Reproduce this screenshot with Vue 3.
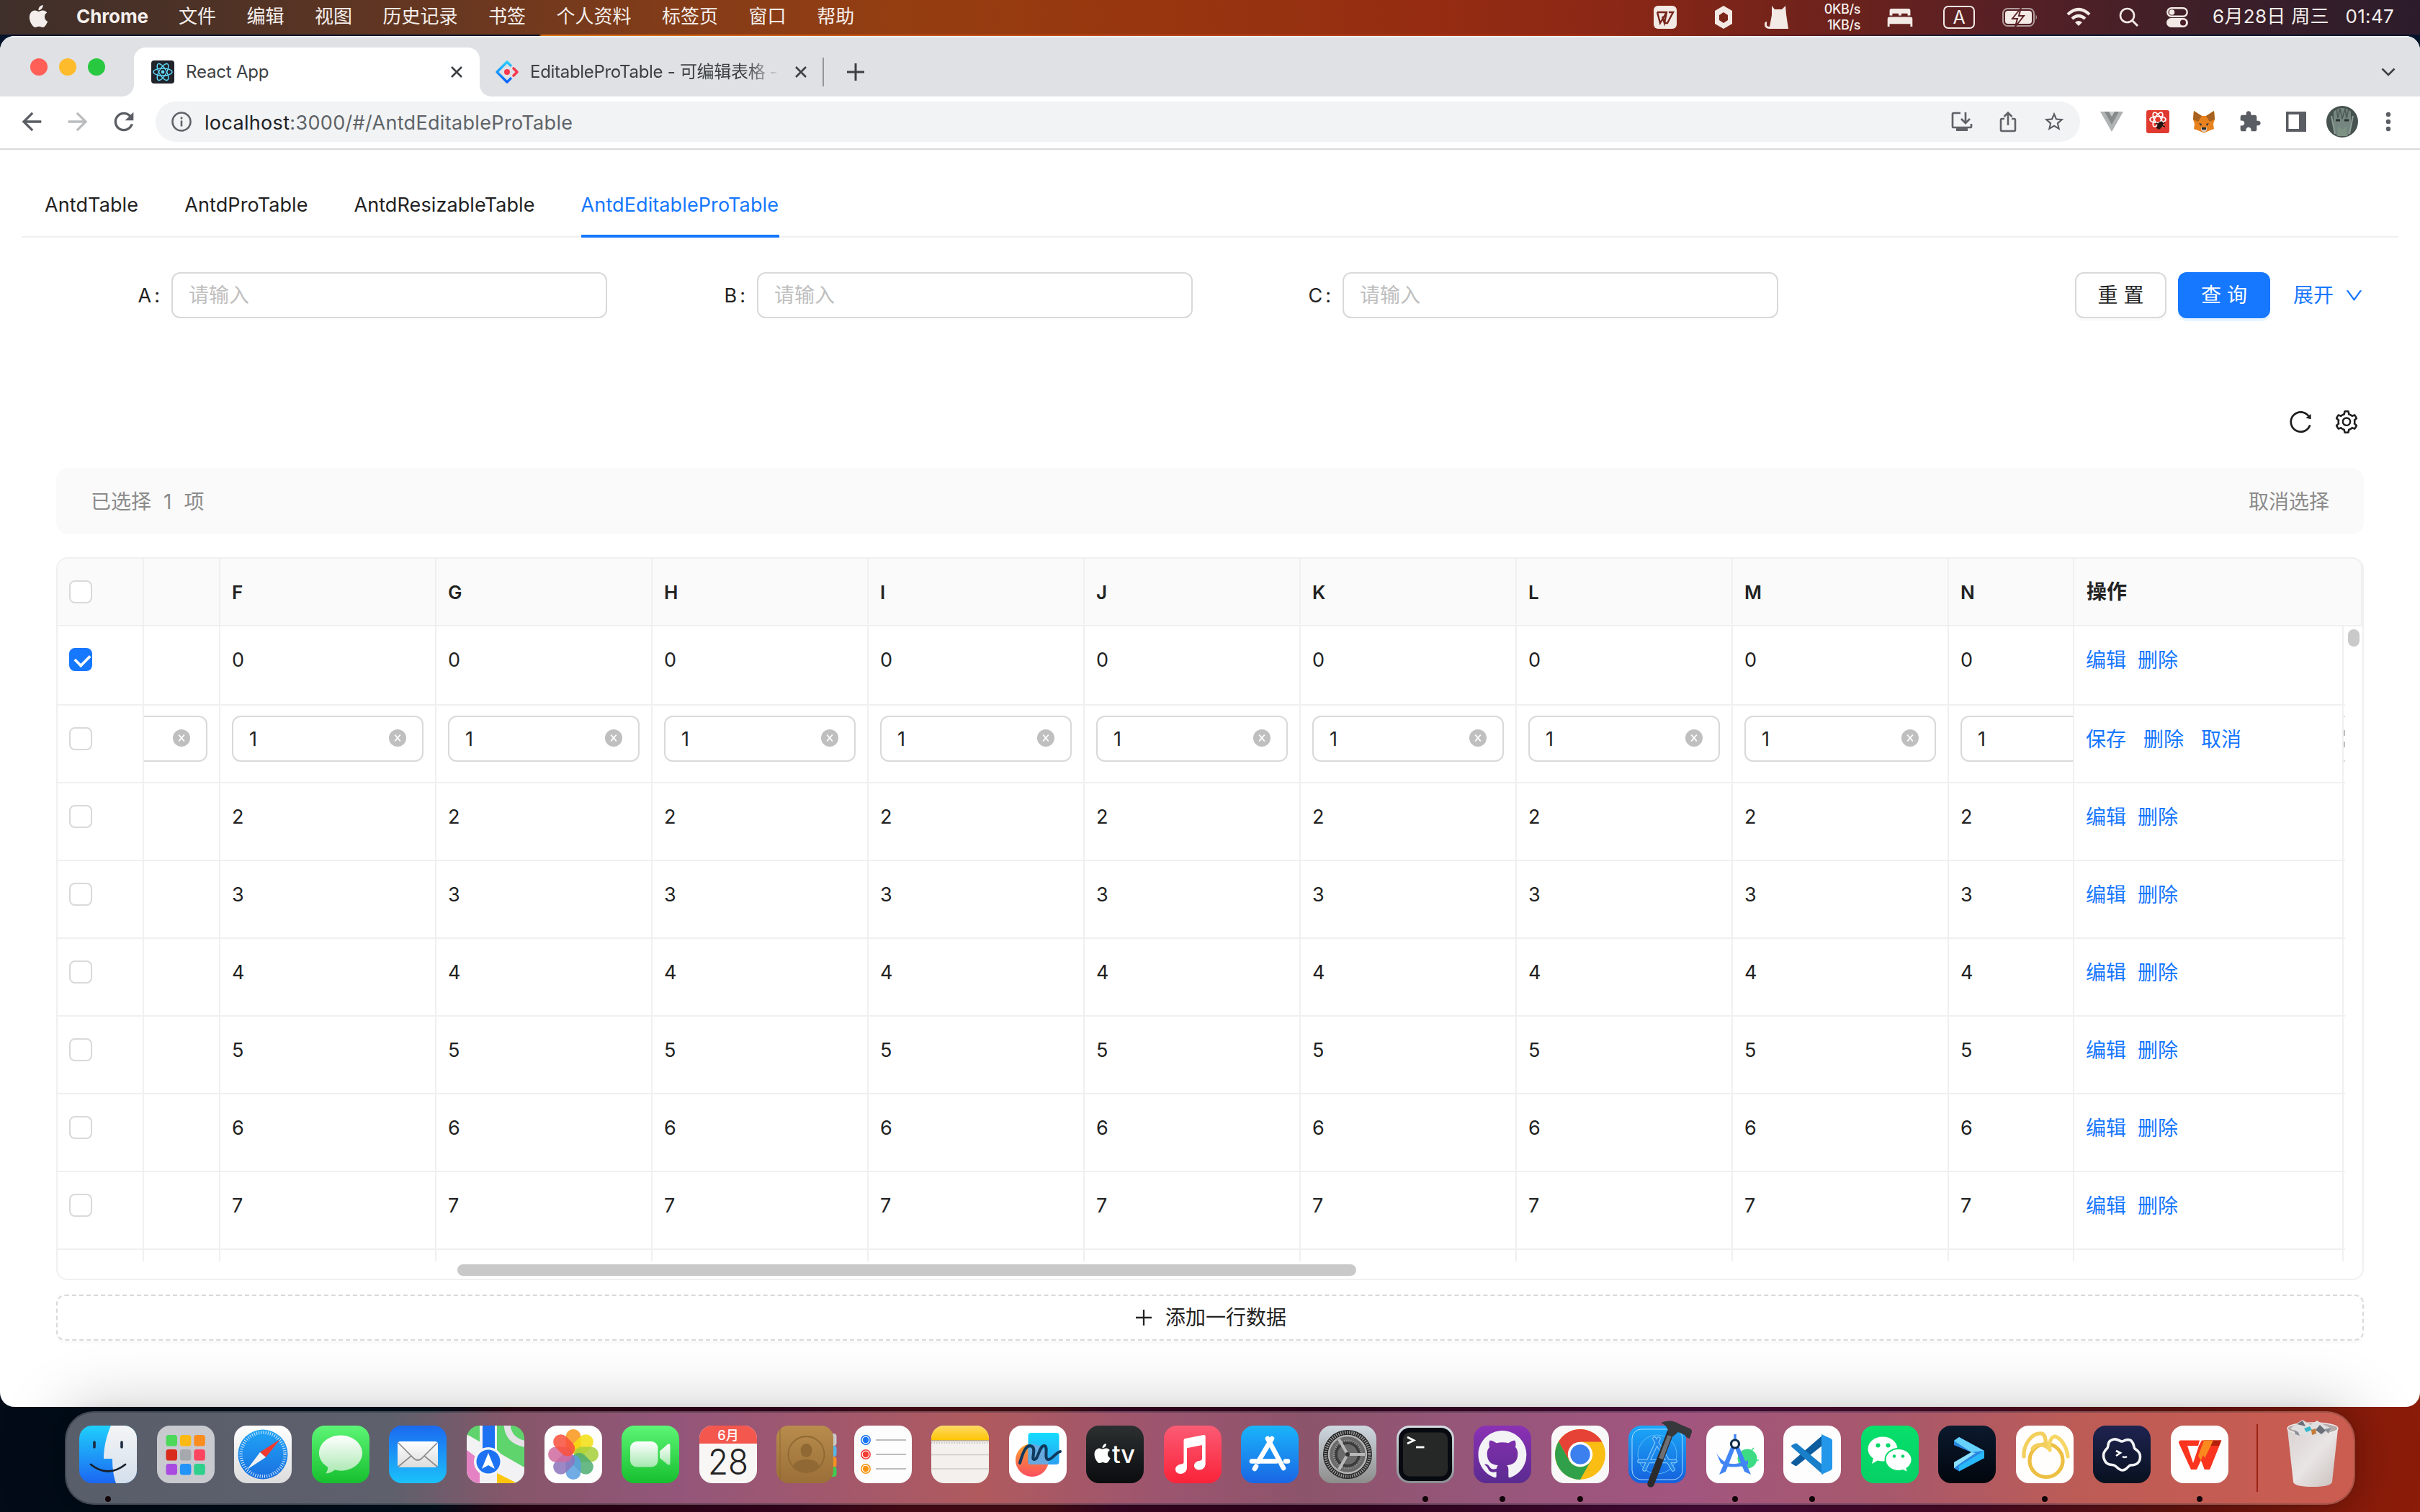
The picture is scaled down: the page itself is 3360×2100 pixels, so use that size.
<script setup>
const menus = ['文件', '编辑', '视图', '历史记录', '书签', '个人资料', '标签页', '窗口', '帮助']
const navTabs = [
  { name: 'AntdTable', w: 130 },
  { name: 'AntdProTable', w: 171 },
  { name: 'AntdResizableTable', w: 251 },
  { name: 'AntdEditableProTable', w: 275, active: true },
]
const fields = ['A', 'B', 'C']
const columns = ['F', 'G', 'H', 'I', 'J', 'K', 'L', 'M', 'N']
const rows = [0, 1, 2, 3, 4, 5, 6, 7]

const apple =
  '<path d="M12.152 6.896c-.948 0-2.415-1.078-3.96-1.04-2.04.027-3.91 1.183-4.961 3.014-2.117 3.675-.546 9.103 1.519 12.09 1.013 1.454 2.208 3.09 3.792 3.039 1.52-.065 2.09-.987 3.935-.987 1.831 0 2.35.987 3.96.948 1.637-.026 2.676-1.48 3.676-2.948 1.156-1.688 1.636-3.325 1.662-3.415-.039-.013-3.182-1.221-3.22-4.857-.026-3.04 2.48-4.494 2.597-4.559-1.429-2.09-3.623-2.324-4.39-2.376-2-.156-3.675 1.09-4.61 1.09zM15.53 3.83c.843-1.012 1.4-2.427 1.245-3.83-1.207.052-2.662.805-3.532 1.818-.78.896-1.454 2.338-1.273 3.714 1.338.104 2.715-.688 3.559-1.701"/>'

const grad = (id, a, b, x2 = 0, y2 = 1) =>
  `<defs><linearGradient id="${id}" x1="0" y1="0" x2="${x2}" y2="${y2}"><stop offset="0" stop-color="${a}"/><stop offset="1" stop-color="${b}"/></linearGradient></defs>`
const base = (fill) => `<rect width="80" height="80" rx="18" fill="${fill}"/>`
const clip = (id, body) =>
  `<defs><clipPath id="${id}"><rect width="80" height="80" rx="18"/></clipPath></defs><g clip-path="url(#${id})">${body}</g>`

const padColors = ['#4cd95a', '#fdb913', '#fb8c1e', '#d92b1c', '#a5a9ad', '#ff4560', '#a94be0', '#2294f8', '#2fd08c']
const launchpad = padColors
  .map((c, i) => `<rect x="${12.5 + (i % 3) * 19.4}" y="${13 + Math.floor(i / 3) * 20}" width="15.5" height="15.5" rx="3.6" fill="${c}"/>`)
  .join('')
const petalColors = ['#f9961c', '#f3de12', '#a7cf3a', '#4fae72', '#5aa0e0', '#8d74bd', '#d16ba0', '#f9503c']
const petals = petalColors
  .map((c, i) => `<rect x="29.5" y="5" width="21" height="34" rx="10.5" fill="${c}" opacity=".86" transform="rotate(${i * 45} 40 40)"/>`)
  .join('')

const dock = [
  { run: true, svg: grad('fi', '#1fd0fc', '#1c66f2') + grad('fj', '#f4f5f6', '#d3dfec') + clip('cf', '<rect width="80" height="80" fill="url(#fi)"/><path d="M44 0C37 16 34 32 34 46h12c0 14 2 26 5 34h29V0z" fill="url(#fj)"/><path d="M21 23v7M59 23v7" stroke="#1b2b40" stroke-width="3.6" stroke-linecap="round"/><path d="M16 54q24 19 48 0" fill="none" stroke="#16202c" stroke-width="2.8" stroke-linecap="round"/>') },
  { svg: base('#c9cad0') + launchpad },
  { svg: grad('sa', '#ffffff', '#dcdcdc') + grad('sb', '#20a5f6', '#1a6fe0') + base('url(#sa)') + '<circle cx="40" cy="40" r="34.5" fill="url(#sb)"/><circle cx="40" cy="40" r="30.5" fill="none" stroke="#d9ecfc" stroke-width="4.5" stroke-dasharray="1 2.2"/><path d="M64 19L36 37l8 7z" fill="#f2392f"/><path d="M18 61l18-24 8 7z" fill="#f1f1f1"/>' },
  { svg: grad('me', '#5df576', '#16bf2e') + grad('mf', '#ffffff', '#a9e8b0') + base('url(#me)') + '<path d="M40 13.5c-16.500 0-30 11-30 24.700 0 8 4.800 15 12.300 19.600-.2 3.600-1.500 6.600-3 8.700 5 0 9.400-2.400 12.400-4.900 2.600.7 5.400 1.100 8.300 1.100 16.500 0 30-11 30-24.500s-13.500-24.700-30-24.700z" fill="url(#mf)"/>' },
  { svg: grad('ma', '#1b69f0', '#1bc2fb') + grad('mb', '#ffffff', '#dcdcdc') + base('url(#ma)') + '<rect x="12" y="22" width="56" height="36" rx="4" fill="url(#mb)"/><path d="M13 24l22 22q5 4 10 0l22-22M13 57l18-15M67 57L49 42" fill="none" stroke="#8b8b8d" stroke-width="1.700"/>' },
  { svg: clip('cm', '<rect width="80" height="80" fill="#5fd36c"/><path d="M0 12v68h80V58z" fill="#f2f2f4"/><path d="M0 34l30 22v24H0z" fill="#e582c4"/><path d="M18 0h24v80H18z" fill="#f2f2f4"/><path d="M22 0h17v42H22z" fill="#1c72f3"/><path d="M42 80V66l28 14z" fill="#fdc50e"/><path d="M56-4q0 26 28 30" fill="none" stroke="#e3e3e6" stroke-width="9"/><circle cx="30" cy="50" r="20" fill="#f4f5f7"/><circle cx="30" cy="50" r="16.500" fill="#1c72f3"/><path d="M30 38l9 22-9-5-9 5z" fill="#fff"/>') },
  { svg: base('#fefefe') + petals },
  { svg: grad('ft', '#5df576', '#16bf2e') + grad('fu', '#ffffff', '#a6e8b0') + base('url(#ft)') + '<rect x="12" y="22" width="38.500" height="35.500" rx="9" fill="url(#fu)"/><path d="M53 35.500l11-9.500q3.500-2 3.500 2v24q0 4-3.500 2L53 45z" fill="url(#fu)"/>' },
  { svg: clip('cc', '<rect width="80" height="80" fill="#f8f7f6"/><rect width="80" height="25" fill="#f4574e"/>') + '<text x="40" y="19.500" text-anchor="middle" font-size="18" font-weight="500" fill="#fff">6月</text><text x="40" y="68" text-anchor="middle" font-size="49" font-weight="300" fill="#222" textLength="56" lengthAdjust="spacingAndGlyphs">28</text>' },
  { svg: grad('co', '#b78c4c', '#9b6f38') + '<rect x="40" y="11" width="43.500" height="17" rx="4" fill="#c9c9c9"/><rect x="40" y="28" width="43.500" height="15" rx="4" fill="#57b5e8"/><rect x="40" y="43" width="43.500" height="15" rx="4" fill="#f58f21"/><rect x="40" y="57" width="43.500" height="14" rx="4" fill="#3fcb52"/><rect width="79" height="80" rx="17" fill="url(#co)"/><path d="M5 4v72" stroke="#8f6630" stroke-width="1"/><circle cx="41.500" cy="40" r="25" fill="none" stroke="#8f6833" stroke-width="1.800"/><ellipse cx="41.500" cy="34.500" rx="8" ry="9.500" fill="#8f6833"/><path d="M23 57q3-10 18.500-10T60 57q-7 8-18.500 8T23 57z" fill="#8f6833"/>' },
  { svg: base('#fdfdfd') + '<path d="M30 20h42M30 40h42M30 60h42" stroke="#bcbcbc" stroke-width="2"/>' + [['#1873f5', 20], ['#f53a31', 40], ['#f79411', 60]].map((p) => `<circle cx="16" cy="${p[1]}" r="6.200" fill="none" stroke="${p[0]}" stroke-width="1.500"/><circle cx="16" cy="${p[1]}" r="4.200" fill="${p[0]}"/>`).join('') },
  { svg: grad('no', '#fdd966', '#fec503') + clip('cn', '<rect width="80" height="80" fill="#f3f0ee"/><rect width="80" height="20.500" fill="url(#no)"/><path d="M0 21h80" stroke="#8f8577" stroke-width="1.200"/><path d="M0 24h80" stroke="#bbb" stroke-width="1.500" stroke-dasharray="1.500 2"/><path d="M0 40.500h80M0 60h80" stroke="#cfcbc8" stroke-width="1.500"/>') },
  { svg: grad('fr', '#16dcff', '#2ba0f0') + grad('fs', '#f9a02c', '#fb4f60') + base('#fff') + '<circle cx="32" cy="48" r="23" fill="url(#fs)"/><rect x="26.500" y="10" width="43" height="44" rx="4" fill="url(#fr)"/><path d="M27 26q24-3 28 24l-1 4H30q-4 0-3.500-4z" fill="#6fa9dd" opacity=".9"/><path d="M15 52C20 34 25 25 32 29c6 4-2 18 3 18 6 0 7-20 14-19 6 1-1 18 5 19 5 1 9-8 17-11" fill="none" stroke="#103a5d" stroke-width="4" stroke-linecap="round"/>' },
  { svg: grad('tv', '#2c3031', '#0a0c0e') + base('url(#tv)') + `<g fill="#fff" transform="translate(9 25) scale(1.130)">${apple}</g><text x="36" y="52" font-size="34" font-weight="500" fill="#fff" textLength="32" lengthAdjust="spacingAndGlyphs">tv</text>` },
  { svg: grad('mu', '#fb5b74', '#fa2339') + base('url(#mu)') + '<path d="M27.500 20.500q0-2 2-2.400L55 13q2.700-.4 2.700 2v38c0 5-4 8.500-8.700 8.500-4.300 0-7-2.600-7-5.800 0-4.600 4-6.300 8-7 2.300-.4 3-1.200 3-3.200V27l-21 4.300v27c0 5-4 8.700-8.700 8.700-4.400 0-7.300-2.800-7.300-6.200 0-4.400 4-6.500 8-7.200 2.500-.4 3.500-1.300 3.500-3.200z" fill="#fff"/>' },
  { svg: grad('as', '#1ab4fb', '#1a66e4') + base('url(#as)') + '<path d="M43 18L24 50M37 18l22 41M15 49.500h34M62 49.500h3M19 60l2-3.500" stroke="#fff" stroke-width="6.600" stroke-linecap="round"/>' },
  { svg: grad('se', '#cfd8e0', '#8d8d8b') + base('url(#se)') + '<circle cx="40" cy="40" r="34" fill="#242424"/><circle cx="40" cy="40" r="30.500" fill="none" stroke="#9a9a9a" stroke-width="4.500" stroke-dasharray="1.500 1.600"/><circle cx="40" cy="40" r="26" fill="#6b6b6b" stroke="#b5b5b5" stroke-width="2.500"/><circle cx="40" cy="40" r="19" fill="#3c3c3c" stroke="#8e8e8e" stroke-width="3" stroke-dasharray="1.500 1.500"/><circle cx="40" cy="40" r="14" fill="#6a6a6a"/><path d="M40 40h24M40 40L28 19M40 40L28 61" stroke="#b9b9b9" stroke-width="4"/><circle cx="40" cy="40" r="3" fill="#333"/>' },
  { run: true, svg: grad('te', '#d7dfe4', '#8b8f92') + base('url(#te)') + '<rect x="3" y="3" width="74" height="74" rx="15.500" fill="#070a10"/><rect x="9" y="9.500" width="62" height="61" rx="9" fill="#262828"/><path d="M15 16l9 4.500-9 4.500" fill="none" stroke="#fff" stroke-width="2.800"/><path d="M27 30h11.500" stroke="#fff" stroke-width="2.800"/>' },
  { run: true, svg: grad('gh', '#8b31b5', '#5a2b90') + base('url(#gh)') + '<path transform="translate(6.500 7) scale(4.180)" fill="#f3f3f6" d="M8 0C3.580 0 0 3.580 0 8c0 3.540 2.290 6.530 5.470 7.590.4.070.55-.17.55-.38 0-.19-.01-.82-.01-1.490-2.010.37-2.530-.49-2.690-.94-.09-.23-.48-.94-.82-1.130-.28-.15-.68-.52-.01-.53.63-.01 1.080.58 1.230.82.72 1.210 1.870.87 2.330.66.070-.52.28-.87.51-1.070-1.780-.2-3.640-.89-3.640-3.950 0-.87.31-1.590.82-2.150-.08-.2-.36-1.020.080-2.120 0 0 .67-.21 2.200.82.64-.18 1.320-.27 2-.27.68 0 1.360.090 2 .27 1.530-1.040 2.200-.82 2.200-.82.44 1.100.16 1.920.080 2.120.51.56.82 1.270.82 2.150 0 3.070-1.870 3.750-3.650 3.950.29.25.54.73.54 1.480 0 1.070-.01 1.930-.01 2.200 0 .21.15.46.55.38A8.013 8.013 0 0016 8c0-4.420-3.580-8-8-8z"/>' },
  { run: true, svg: base('#f8f8f8') + '<circle cx="40" cy="40" r="35" fill="#f9bd14"/><path d="M40 22.500h30.300A35 35 0 0 0 10 22l15 27z" fill="#e64235"/><path d="M10 22A35 35 0 0 0 40 75l15-26.500A17.500 17.500 0 0 1 25 49z" fill="#31a04a"/><circle cx="40" cy="40" r="17.200" fill="#fff"/><circle cx="40" cy="40" r="13.700" fill="#3b80ee"/>' },
  { svg: grad('xc', '#1ba8f8', '#1560dc') + base('url(#xc)') + '<rect x="5" y="5" width="70" height="70" rx="13" fill="none" stroke="#a8dcff" stroke-width="1"/><circle cx="40" cy="40" r="27" fill="none" stroke="#5cbcf8" stroke-width="1"/><path d="M42 18L22 61M36 18l26 43M15 49.500h50" stroke="#8fd0fb" stroke-width="5.500" stroke-linecap="round"/><path d="M42 18L22 61M36 18l26 43M15 49.500h50" stroke="#2088ea" stroke-width="3.500" stroke-linecap="round"/><path d="M58 10L31 81" stroke="#2b2b2e" stroke-width="9.500" stroke-linecap="round"/><path d="M57 14L45 46" stroke="#6d7074" stroke-width="6"/><path d="M45-4q14-6 26 2l12 5q6 2 5 6l-3 9q-5-1-7-5l-9-4-7 6-7-2q2-11-10-17z" fill="#36383b"/>' },
  { run: true, svg: base('#fefefe') + '<circle cx="57" cy="46" r="13.500" fill="#3ddc84"/><path d="M60 38l6-7M66 48h7" stroke="#3ddc84" stroke-width="1.500"/><path d="M35 28L18 68l9-4 13-33 13 33 9 4-17-40z" fill="#4285f4"/><path d="M14 38q14 24 44 10v6q-26 8-38-2z" fill="#4285f4"/><path d="M40 12v8" stroke="#4285f4" stroke-width="3.500"/><circle cx="40" cy="25.500" r="5.500" fill="#fff" stroke="#0a2a4a" stroke-width="3.200"/>' },
  { run: true, svg: base('#fdfdfe') + '<path d="M12 50q-2 2 0 3l4 2.500q2 1 3 0L55 27V13z" fill="#0c5c9e"/><path d="M12 30q-2-1.500 0-3l4-2q2-1 3 0l36 30v13z" fill="#1a7fc9"/><path d="M53 12l13 6q2 1 2 3v38q0 2-2 3l-13 6z" fill="#2397ea"/>' },
  { svg: grad('we', '#07e06b', '#06d065') + base('url(#we)') + '<path d="M30 15.500C18.500 15.500 9.500 23 9.500 32.500c0 5.300 3 10 7.500 13l-2 7.500 8-4.500q3.500 1 7 1c11.500 0 20.500-7.500 20.500-17S41.500 15.500 30 15.500z" fill="#fff"/><path d="M52 32c-10.500 0-18.500 7-18.500 15.300S41.500 63 52 63q3.300 0 6-1l7 3.500-1.500-6c4.200-2.800 7-7 7-12C70.500 39 62.500 32 52 32z" fill="#fff" stroke="#07d868" stroke-width="2"/><g fill="#07d868"><circle cx="23.500" cy="27.500" r="3"/><circle cx="37.500" cy="27.500" r="3"/><circle cx="46" cy="42.500" r="2.300"/><circle cx="58" cy="42.500" r="2.300"/></g>' },
  { svg: grad('wa', '#0b1a2e', '#02060d') + base('url(#wa)') + '<path d="M22 21l7-5 35 19v10L29 63.500l-7-4.500v-8L46 37 22 27z" fill="#2a86e0"/><path d="M22 21l7-5 35 19-18 2z" fill="#66d2fb"/><path d="M22 51l24-14 6 1-22 15-8 6z" fill="#8be0fd"/><path d="M64 35v10L29 63.500V56z" fill="#28b7f8"/>' },
  { run: true, svg: base('#fffefd') + '<g fill="none" stroke-width="5.200" stroke-linecap="round"><circle cx="42" cy="48.500" r="23" stroke="#edbf42"/><path d="M11 43C10 28 21 9 36 11c6 2 5 11 6 18-6-4-15-3-19 3" stroke="#f3cf5e"/><path d="M47 34c-2-9 1-18 7-19 9 2 17 16 18 28" stroke="#f6d765"/></g>' },
  { svg: grad('tm', '#1e2350', '#07111f') + base('url(#tm)') + '<path d="M29 19c5-1 8 3 11 3s8-5 13-1c5 5 3 9 5 11 4 3 9 6 7 15-2 8-9 8-13 8-4 1-5 7-11 7s-8-6-12-7-10 0-13-7c-4-9 1-14 4-17 2-3-1-10 9-12z" fill="none" stroke="#f2f3f5" stroke-width="3.600"/><path d="M32 35l6 3-6 4" fill="none" stroke="#fff" stroke-width="2.600"/><path d="M41 43q3 2 6 0" fill="none" stroke="#fff" stroke-width="2.600"/>' },
  { run: true, svg: base('#fefefe') + '<path d="M14 20.500h26l-2 7.500H23l8 24 8-24 4-7.500h27.500L54 61h-7l-5-13-6 13h-8L11 24q0-3.500 3-3.500z" fill="#fa341e"/><path d="M46 20.500h24l-3 7.500H52l-9 21-4-9z" fill="#b3210d"/><path d="M46 20.500h13L44 52l-6-10z" fill="#fb8a1e"/><path d="M59 28h8l-13 33h-7l-5-13 3-7 5 9z" fill="#fa341e"/>' },
]
</script>

<template>
  <div class="desktop">
    <header class="menubar">
      <svg class="apple" viewBox="0 0 24 24" v-html="apple"></svg>
      <b class="app-name">Chrome</b>
      <nav class="menus"><span v-for="m in menus" :key="m">{{ m }}</span></nav>
      <div class="status">
        <svg class="s-wps" viewBox="0 0 32 32"><rect width="32" height="32" rx="6" fill="#f3e9e5" /><path d="M5 9h13l-3 15-3-9M5 9l4 15 9-15M16 24h3l8-15h-6" fill="none" stroke="#75241a" stroke-width="2.400" /></svg>
        <svg class="s-hex" viewBox="0 0 26 32"><path d="M13 0l12 7v18l-12 7L1 25V7zM13 9l-6 4v7l6 4 6-4v-7z" fill="#f3e9e5" fill-rule="evenodd" /></svg>
        <svg class="s-cat" viewBox="0 0 34 32"><path d="M10 0l4 5h10l5-5 1 12 3 20H8q-8 0-8-6 0-4 3-4v3q-1 4 4 4l3-16z" fill="#f3e9e5" /></svg>
        <div class="net"><span>0KB/s</span><span>1KB/s</span></div>
        <svg class="s-bed" viewBox="0 0 36 26"><path d="M3 10V3q0-3 3-3h24q3 0 3 3v7h-4V7h-9v3h-4V7H7v3zM0 26V15q0-3 3-3h30q3 0 3 3v11h-3v-4H3v4z" fill="#f3e9e5" /></svg>
        <span class="s-a">A</span>
        <svg class="s-bat" viewBox="0 0 50 26"><rect x="1" y="1" width="43" height="24" rx="6.500" fill="none" stroke="#b09c9b" stroke-width="2" /><rect x="4" y="4" width="37" height="18" rx="4" fill="#f3e9e5" /><path d="M46.500 9q3 4 0 8z" fill="#b09c9b" /><path d="M26 0L14 15h7l-3 11 12-15h-7z" fill="#f3e9e5" stroke="#5b2327" stroke-width="2" /></svg>
        <svg class="s-wifi" viewBox="0 0 34 26"><path d="M2 9q15-14 30 0M8 15q9-8 18 0" fill="none" stroke="#f3e9e5" stroke-width="4.200" /><path d="M12 20q5-4 10 0l-5 5z" fill="#f3e9e5" /></svg>
        <svg class="s-find" viewBox="0 0 28 28"><circle cx="11.500" cy="11.500" r="9.500" fill="none" stroke="#f3e9e5" stroke-width="2.600" /><path d="M18.500 18.500L26 26" stroke="#f3e9e5" stroke-width="3" /></svg>
        <svg class="s-cc" viewBox="0 0 30 28"><rect x="1.300" y="1.300" width="27.400" height="11.400" rx="5.700" fill="none" stroke="#f3e9e5" stroke-width="2.400" /><circle cx="7.500" cy="7" r="3.800" fill="#f3e9e5" /><rect y="15" width="30" height="13" rx="6.500" fill="#f3e9e5" /><circle cx="23" cy="21.500" r="4" fill="#4a2028" /></svg>
        <time class="clock"><span>6月28日 周三</span><span>01:47</span></time>
      </div>
    </header>

    <main class="window">
      <div class="tabstrip">
        <div class="lights"><i class="red"></i><i class="yellow"></i><i class="green"></i></div>
        <div class="tab active">
          <svg class="favicon" viewBox="0 0 32 32"><rect width="32" height="32" rx="4" fill="#20232a" /><g fill="none" stroke="#61dafb" stroke-width="1.400"><ellipse cx="16" cy="16" rx="13" ry="5" /><ellipse cx="16" cy="16" rx="13" ry="5" transform="rotate(60 16 16)" /><ellipse cx="16" cy="16" rx="13" ry="5" transform="rotate(120 16 16)" /></g><circle cx="16" cy="16" r="2.400" fill="#61dafb" /></svg>
          <span class="tab-title">React App</span>
          <svg class="x" viewBox="0 0 16 16"><path d="M1 1l14 14M15 1L1 15" stroke="#3c4043" stroke-width="2.600" /></svg>
        </div>
        <div class="tab second">
          <svg class="favicon" viewBox="0 0 32 32"><defs><linearGradient id="ant" x1="0" y1="0" x2="0" y2="1"><stop offset="0" stop-color="#29cdff" /><stop offset="1" stop-color="#0a60ff" /></linearGradient></defs><path d="M22 8l-6-6L2 16l14 14 6-6" fill="none" stroke="url(#ant)" stroke-width="3.400" stroke-linejoin="round" /><path d="M25 11l5 5-5 5" fill="none" stroke="#f8384d" stroke-width="3.600" stroke-linejoin="round" stroke-linecap="round" /><circle cx="16" cy="16" r="4" fill="#f8384d" /></svg>
          <span class="tab-title fade">EditableProTable - 可编辑表格 - <wbr /></span>
          <svg class="x" viewBox="0 0 16 16"><path d="M1 1l14 14M15 1L1 15" stroke="#3c4043" stroke-width="2.600" /></svg>
        </div>
        <i class="divider"></i>
        <svg class="plus" viewBox="0 0 24 24"><path d="M12 0v24M0 12h24" stroke="#3c4043" stroke-width="3" /></svg>
        <svg class="caret" viewBox="0 0 20 12"><path d="M1.500 1.500L10 10l8.500-8.500" fill="none" stroke="#3c4043" stroke-width="2.600" /></svg>
      </div>

      <div class="toolbar">
        <svg class="nav-i" viewBox="0 0 24 24"><path fill="#5a5d63" d="M20 11H7.830l5.590-5.590L12 4l-8 8 8 8 1.410-1.410L7.830 13H20v-2z" /></svg>
        <svg class="nav-i flip" viewBox="0 0 24 24"><path fill="#babcbe" d="M20 11H7.830l5.590-5.590L12 4l-8 8 8 8 1.410-1.410L7.830 13H20v-2z" /></svg>
        <svg class="nav-i" viewBox="0 0 24 24"><path fill="#5a5d63" d="M17.650 6.350C16.200 4.900 14.210 4 12 4c-4.420 0-7.990 3.580-7.990 8s3.570 8 7.990 8c3.730 0 6.840-2.550 7.730-6h-2.080c-.82 2.330-3.040 4-5.650 4-3.310 0-6-2.690-6-6s2.690-6 6-6c1.660 0 3.140.69 4.220 1.780L13 11h7V4l-2.350 2.350z" /></svg>
        <div class="omnibox">
          <svg class="info" viewBox="0 0 28 28"><circle cx="14" cy="14" r="12.500" fill="none" stroke="#5f6368" stroke-width="2.600" /><path d="M14 12.500v8M14 7.500v3" stroke="#5f6368" stroke-width="2.600" /></svg>
          <span class="url"><em>localhost</em>:3000/#/AntdEditableProTable</span>
          <svg class="o-i" viewBox="0 0 32 32"><path d="M14 4H4.500Q3 4 3 5.500v17Q3 24 4.500 24h23q1.500 0 1.500-1.500V19M21 3v14M15 12l6 6 6-6" fill="none" stroke="#5f6368" stroke-width="2.700" /><path d="M8 24h16v5H8z" fill="#5f6368" /></svg>
          <svg class="o-i" viewBox="0 0 32 32"><path d="M11 12H7.500Q6 12 6 13.500v14Q6 29 7.500 29h17q1.500 0 1.500-1.500v-14Q26 12 24.500 12H21M16 21V4M10.500 9L16 3.500 21.500 9" fill="none" stroke="#5f6368" stroke-width="2.600" /></svg>
          <svg class="o-i last" viewBox="0 0 24 24"><path fill="#5a5d63" d="M22 9.240l-7.190-.62L12 2 9.190 8.630 2 9.240l5.460 4.730L5.820 21 12 17.270 18.180 21l-1.630-7.030L22 9.240zM12 15.400l-3.760 2.270 1-4.280-3.320-2.880 4.380-.38L12 6.100l1.710 4.040 4.380.38-3.320 2.880 1 4.280L12 15.400z" /></svg>
        </div>
        <div class="exts">
          <svg viewBox="0 0 32 32"><path d="M0 2h32L16 30z" fill="#b0b3b3" /><path d="M6 2h20L16 20z" fill="#868a8a" /><path d="M12 2h8l-4 7z" fill="#c9cccc" /></svg>
          <svg viewBox="0 0 32 32"><rect width="32" height="32" rx="3" fill="#e03a30" /><g fill="none" stroke="#fff" stroke-width="1.700"><ellipse cx="16" cy="13" rx="11" ry="4.500" /><ellipse cx="16" cy="13" rx="11" ry="4.500" transform="rotate(60 16 13)" /><ellipse cx="16" cy="13" rx="11" ry="4.500" transform="rotate(120 16 13)" /></g><ellipse cx="19" cy="21" rx="3.500" ry="6" fill="#251412" transform="rotate(30 19 21)" /><path d="M13 18l13 5M14 25l12-8" stroke="#251412" stroke-width="1.500" /></svg>
          <svg viewBox="0 0 32 32"><path d="M2 1l11 7h6l11-7 1 12-2 6 1 7-8 3-4 2h-4l-4-2-8-3 1-7-2-6z" fill="#e8821e" /><path d="M2 1l11 7-5 8-7-3zM30 1L19 8l5 8 7-3z" fill="#a8621f" /><path d="M12 24h8v4l-2 2h-4l-2-2z" fill="#d9c5b5" /><path d="M13 24h6v3h-6z" fill="#202a33" /><path d="M9 18l4 1-1 3zM23 18l-4 1 1 3z" fill="#263546" /></svg>
          <svg viewBox="0 0 24 24"><path fill="#5a5d63" d="M20.500 11H19V7c0-1.100-.9-2-2-2h-4V3.500C13 2.120 11.880 1 10.500 1S8 2.120 8 3.500V5H4c-1.100 0-1.990.9-1.990 2v3.800H3.500c1.490 0 2.700 1.210 2.700 2.700s-1.210 2.700-2.700 2.700H2V20c0 1.100.9 2 2 2h3.800v-1.500c0-1.490 1.210-2.700 2.700-2.700 1.490 0 2.700 1.210 2.700 2.700V22H17c1.100 0 2-.9 2-2v-4h1.500c1.380 0 2.500-1.120 2.500-2.500S21.880 11 20.500 11z" /></svg>
          <svg viewBox="0 0 32 32"><path d="M2 2h28v28H2zM5.500 6v20H20V6z" fill="#5a5d63" fill-rule="evenodd" /></svg>
          <svg class="avatar" viewBox="0 0 44 44"><circle cx="22" cy="22" r="22" fill="#46524f" /><path d="M10 8q12-10 24 0v26l-5 8H15l-5-8z" fill="#75857f" /><path d="M14 3l2 14 3-13 3 14 4-14 2 13 3-13" stroke="#4d5854" stroke-width="1.500" fill="none" /><path d="M13 20h6M25 20h6" stroke="#2a3230" stroke-width="3" /><path d="M16 42V28l6 5 6-5v14z" fill="#7d9283" /><path d="M7 14l5 25M37 14l-5 25" stroke="#8f9d97" stroke-width="2" /></svg>
          <svg class="kebab" viewBox="0 0 8 28"><circle cx="4" cy="4" r="3.200" fill="#5a5d63" /><circle cx="4" cy="14" r="3.200" fill="#5a5d63" /><circle cx="4" cy="24" r="3.200" fill="#5a5d63" /></svg>
        </div>
      </div>

      <section class="page">
        <nav class="nav-tabs">
          <a v-for="t in navTabs" :key="t.name" :class="{ on: t.active }" :style="{ width: t.w + 'px' }">{{ t.name }}</a>
        </nav>

        <form class="query" @submit.prevent>
          <label v-for="f in fields" :key="f" class="field">
            <span class="label">{{ f }}<span class="colon">:</span></span>
            <span class="input">请输入</span>
          </label>
          <div class="buttons">
            <span class="btn">重 置</span>
            <span class="btn primary">查 询</span>
            <span class="expand">展开
              <svg viewBox="64 64 896 896"><path fill="#1677ff" d="M884 256h-75c-5.100 0-9.900 2.500-12.900 6.600L512 654.200 227.900 262.600c-3-4.100-7.800-6.600-12.900-6.600h-75c-6.500 0-10.300 7.400-6.500 12.700l352.600 486.100c12.800 17.600 39 17.600 51.700 0l352.600-486.100c3.900-5.300.1-12.700-6.400-12.700z" /></svg>
            </span>
          </div>
        </form>

        <div class="tools">
          <svg viewBox="64 64 896 896"><path d="M909.100 209.300l-56.400 44.100C775.800 155.100 656.200 92 521.900 92 290 92 102.300 279.500 102 511.500 101.700 743.700 289.800 932 521.900 932c181.300 0 335.800-115 394.600-276.100 1.500-4.200-.7-8.900-4.900-10.300l-56.700-19.500a8 8 0 00-10.100 4.800c-1.800 5-3.800 10-5.900 14.900-17.300 41-42.100 77.800-73.700 109.400A344.770 344.770 0 01655.900 829c-42.300 17.900-87.400 27-133.800 27-46.500 0-91.500-9.100-133.800-27A341.500 341.500 0 01279 755.200a342.160 342.160 0 01-73.700-109.400c-17.900-42.400-27-87.400-27-133.900s9.100-91.500 27-133.900c17.300-41 42.100-77.800 73.700-109.400 31.600-31.600 68.400-56.400 109.300-73.800 42.300-17.900 87.400-27 133.800-27 46.500 0 91.500 9.100 133.800 27a341.500 341.500 0 01109.300 73.800c9.900 9.900 19.200 20.400 27.800 31.400l-60.200 47a8 8 0 003 14.100l175.600 43c5 1.200 9.900-2.600 9.900-7.700l.8-180.900c-.1-6.600-7.800-10.300-13-6.200z" /></svg>
          <svg viewBox="64 64 896 896"><path d="M924.800 625.700l-65.500-56c3.100-19 4.700-38.400 4.700-57.800s-1.600-38.800-4.700-57.800l65.500-56a32.030 32.030 0 009.300-35.200l-.9-2.600a443.740 443.740 0 00-79.700-137.900l-1.800-2.100a32.120 32.120 0 00-35.100-9.500l-81.300 28.900c-30-24.600-63.500-44-99.700-57.600l-15.700-85a32.050 32.050 0 00-25.800-25.700l-2.700-.5c-52.100-9.400-106.900-9.400-159 0l-2.700.5a32.050 32.050 0 00-25.800 25.700l-15.800 85.400a351.860 351.860 0 00-99 57.400l-81.900-29.100a32 32 0 00-35.100 9.500l-1.800 2.100a446.020 446.020 0 00-79.700 137.900l-.9 2.600c-4.500 12.500-.8 26.500 9.300 35.200l66.300 56.600c-3.100 18.800-4.600 38-4.600 57.100 0 19.200 1.500 38.400 4.600 57.100L99 625.500a32.030 32.030 0 00-9.300 35.200l.9 2.600c18.100 50.400 44.900 96.900 79.700 137.900l1.800 2.100a32.120 32.120 0 0035.100 9.500l81.900-29.100c29.800 24.500 63.100 43.900 99 57.400l15.800 85.400a32.050 32.050 0 0025.800 25.700l2.700.5a449.400 449.400 0 00159 0l2.700-.5a32.050 32.050 0 0025.800-25.700l15.700-85a350 350 0 0099.700-57.600l81.300 28.900a32 32 0 0035.100-9.500l1.800-2.100c34.800-41.100 61.600-87.500 79.700-137.900l.9-2.600c4.500-12.300.8-26.300-9.300-35zM788.300 465.900c2.500 15.100 3.800 30.600 3.800 46.100s-1.300 31-3.800 46.100l-6.600 40.100 74.700 63.900a370.030 370.030 0 01-42.600 73.600L721 702.800l-31.400 25.800c-23.900 19.600-50.500 35-79.300 45.800l-38.100 14.300-17.900 97a377.500 377.500 0 01-85 0l-17.900-97.200-37.800-14.500c-28.500-10.800-55-26.200-78.700-45.700l-31.400-25.900-93.400 33.200c-17-22.900-31.200-47.600-42.600-73.600l75.500-64.500-6.500-40c-2.400-14.900-3.700-30.300-3.700-45.500 0-15.300 1.200-30.600 3.700-45.500l6.500-40-75.500-64.500c11.300-26.100 25.600-50.700 42.600-73.600l93.400 33.200 31.400-25.900c23.700-19.500 50.200-34.900 78.700-45.700l37.900-14.300 17.900-97.200c28.100-3.200 56.800-3.200 85 0l17.900 97 38.100 14.300c28.700 10.800 55.400 26.200 79.300 45.800l31.400 25.800 92.800-32.900c17 22.900 31.200 47.600 42.600 73.600L781.800 426l6.500 39.900zM512 326c-97.200 0-176 78.800-176 176s78.800 176 176 176 176-78.800 176-176-78.800-176-176-176zm79.200 255.200A111.600 111.600 0 01512 614c-29.900 0-58-11.700-79.200-32.800A111.600 111.600 0 01400 502c0-29.900 11.700-58 32.800-79.200C454 401.600 482.100 390 512 390c29.900 0 58 11.600 79.200 32.800A111.600 111.600 0 01624 502c0 29.900-11.700 58-32.800 79.200z" /></svg>
        </div>

        <div class="alert"><span class="picked"><span>已选择</span><span>1</span><span>项</span></span><span>取消选择</span></div>

        <div class="table">
          <div class="row head">
            <div class="cell check"><i class="box"></i></div>
            <div class="cell stub"></div>
            <div v-for="c in columns" :key="c" class="cell" :class="{ narrow: c === 'N' }">{{ c }}</div>
            <div class="cell ops">操作</div>
          </div>
          <div class="body">
            <div v-for="r in rows" :key="r" class="row" :class="{ first: r === 0 }">
              <div class="cell check">
                <i class="box" :class="{ ticked: r === 0 }"></i>
              </div>
              <div class="cell stub">
                <span v-if="r === 1" class="edit tail"><svg class="clear" viewBox="0 0 24 24"><circle cx="12" cy="12" r="12" fill="#bfbfbf" /><path d="M8.200 7.500l7.600 9M15.800 7.500l-7.600 9" stroke="#fff" stroke-width="1.900" /></svg></span>
              </div>
              <div v-for="c in columns" :key="c" class="cell" :class="{ narrow: c === 'N' }">
                <span v-if="r === 1" class="edit">1<svg class="clear" viewBox="0 0 24 24"><circle cx="12" cy="12" r="12" fill="#bfbfbf" /><path d="M8.200 7.500l7.600 9M15.800 7.500l-7.600 9" stroke="#fff" stroke-width="1.900" /></svg></span>
                <template v-else>{{ r }}</template>
              </div>
              <div class="cell ops" :class="{ editing: r === 1 }">
                <template v-if="r === 1"><a>保存</a><a>删除</a><a>取消</a></template>
                <template v-else><a>编辑</a><a>删除</a></template>
              </div>
              <div class="sliver"><i v-if="r === 1"></i></div>
            </div>
            <div class="row partial">
              <div class="cell check"></div>
              <div class="cell stub"></div>
              <div v-for="c in columns" :key="c" class="cell" :class="{ narrow: c === 'N' }"></div>
              <div class="cell ops"></div>
            </div>
            <i class="vthumb"></i>
          </div>
          <div class="hscroll"><i></i></div>
        </div>

        <div class="add">
          <svg viewBox="0 0 24 24"><path d="M12 1v22M1 12h22" stroke="#222" stroke-width="2.300" /></svg>添加一行数据
        </div>
      </section>
    </main>

    <footer class="dock">
      <div v-for="(d, i) in dock" :key="i" class="app">
        <svg viewBox="0 0 80 80" v-html="d.svg"></svg>
        <i v-if="d.run" class="dot"></i>
      </div>
      <i class="dock-sep"></i>
      <svg class="trash" viewBox="0 0 72 94">
        <defs><linearGradient id="bin" x1="0" y1="0" x2="1" y2="1"><stop offset="0" stop-color="#d9d3d2" /><stop offset=".5" stop-color="#e9e5e4" /><stop offset="1" stop-color="#c9bfbd" /></linearGradient></defs>
        <path d="M1 13l8 73q1 7 27 7t27-7l8-73z" fill="url(#bin)" />
        <ellipse cx="36" cy="12" rx="35" ry="8" fill="#b5a9a8" stroke="#eeeaea" stroke-width="1.500" />
        <path d="M5 12l9-7 8-5 11 7 9-6 8 5 12 6-3 6-12 4-25-1z" fill="#dfdfe0" />
        <path d="M14 6l8-5 4 8zM40 14l6-7 8 8-6 5z" fill="#6b6f78" />
        <path d="M24 12l8-3 3 5-8 3z" fill="#39b7c9" />
        <path d="M34 14l6-2 1 7-6 2z" fill="#c77a39" />
        <path d="M10 14l6 3 2 5-6-2zM52 13l10-2-4 8z" fill="#8d8f96" />
      </svg>
    </footer>
  </div>
</template>

<style>
body { overflow: hidden; }
.app svg text { font-family: Inter, "Noto Sans CJK SC", sans-serif; }
</style>

<style scoped>
* { box-sizing: border-box; }
.desktop {
  width: 3360px; height: 2100px; overflow: hidden;
  display: flex; flex-direction: column;
  font-family: Inter, "Noto Sans CJK SC", sans-serif; font-size: 28px; line-height: 1; color: #222;
  background:
    linear-gradient(90deg, #03142a 0, #03142a 748px, #d9731a 752px, #c4521a 1300px, #a5321a 2200px, #5b1a1d 2500px, #071c38 2750px, #04142b 100%) 0 0 / 100% 120px no-repeat,
    linear-gradient(90deg, #020b17 0, #02101d 600px, #2a0414 700px, #380520 1100px, #4c0c18 1250px, #4a0e16 1450px, #3a0624 1550px, #33041f 1850px, #4a0c3c 2360px, #4a0a28 2700px, #631410 3000px, #8c1c0a 3300px);
}
i, em { font-style: normal; }
svg { display: block; flex: none; overflow: visible; }

.menubar {
  height: 48px; flex: none; display: flex; align-items: center; padding: 0 36px 2px 38px; color: #f5efec; font-size: 26px;
  background: linear-gradient(90deg, #3f2f2a 0, #4e3226 300px, #6a3820 650px, #843c18 950px, #953e12 1250px, #98360f 1600px, #952c12 2000px, #8a2716 2250px, #6c221c 2550px, #552025 2800px, #3c1f29 3080px, #2c1c2b 100%);
}
.apple { width: 31px; height: 31px; fill: #f3eeeb; margin-top: -2px; }
.app-name { width: 104px; margin-left: 37px; font-weight: 700; letter-spacing: -.1px; }
.menus { display: flex; gap: 42.5px; margin-left: 38px; }
.status { margin-left: auto; display: flex; align-items: center; height: 100%; padding-top: 2px; }
.s-wps { width: 32px; height: 32px; }
.s-hex { width: 26px; height: 32px; margin-left: 52px; }
.s-cat { width: 34px; height: 32px; margin-left: 44px; }
.net { width: 52px; margin-left: 47px; display: flex; flex-direction: column; align-items: flex-end; font-size: 18px; line-height: 22px; letter-spacing: -.4px; font-weight: 500; }
.s-bed { width: 36px; height: 25px; margin-left: 37px; }
.s-a { width: 44px; height: 32px; margin-left: 42px; border: 2px solid #f3e9e5; border-radius: 7px; font-size: 25px; line-height: 29px; text-align: center; }
.s-bat { width: 50px; height: 26px; margin-left: 38px; }
.s-wifi { width: 34px; height: 26px; margin-left: 39px; }
.s-find { width: 28px; height: 28px; margin-left: 39px; }
.s-cc { width: 30px; height: 28px; margin-left: 38px; }
.clock { width: 252px; margin-left: 34px; display: flex; justify-content: space-between; white-space: nowrap; padding-bottom: 2px; letter-spacing: .3px; }

.window {
  margin-top: 2px; height: 1904px; flex: none; border-radius: 20px; overflow: hidden; background: #fff;
  display: flex; flex-direction: column; position: relative;
}
.tabstrip { height: 84px; flex: none; background: #dfe1e5; display: flex; align-items: center; padding-top: 16px; box-shadow: inset 0 2px #eef0f2; }
.lights { display: flex; gap: 16px; margin: 0 40px 0 42px; padding-bottom: 14px; }
.lights i { width: 24px; height: 24px; border-radius: 50%; }
.red { background: #ff5f57; } .yellow { background: #febb2c; } .green { background: #28c840; }
.tab { height: 68px; display: flex; align-items: center; }
.tab.active { width: 480px; background: #fff; border-radius: 16px 16px 0 0; padding: 0 24px; position: relative; }
.tab.active::before, .tab.active::after { content: ''; position: absolute; bottom: 0; width: 16px; height: 16px; }
.tab.active::before { left: -16px; background: radial-gradient(circle at 0 0, transparent 15.5px, #fff 16px); }
.tab.active::after { right: -16px; background: radial-gradient(circle at 100% 0, transparent 15.5px, #fff 16px); }
.tab.second { width: 476px; padding: 0 22px; }
.favicon { width: 32px; height: 32px; }
.tab-title { margin-left: 16px; font-size: 24px; letter-spacing: -.2px; color: #3c4043; white-space: nowrap; line-height: 36px; }
.fade { width: 350px; margin-right: 20px; overflow: hidden; letter-spacing: -.3px; -webkit-mask-image: linear-gradient(90deg, #000 86%, transparent); mask-image: linear-gradient(90deg, #000 86%, transparent); }
.x { width: 16px; height: 16px; margin-left: auto; }
.divider { width: 2px; height: 40px; background: #93969b; }
.plus { width: 24px; height: 24px; margin-left: 32px; }
.caret { width: 20px; height: 12px; margin-left: auto; margin-right: 34px; }

.toolbar { height: 74px; flex: none; display: flex; align-items: center; padding: 0 40px 2px 24px; border-bottom: 2px solid #dadada; background: #fff; }
.nav-i { width: 40px; height: 40px; margin-right: 24px; }
.flip { transform: scaleX(-1); }
.omnibox { width: 2672px; height: 56px; border-radius: 28px; background: #f1f3f4; display: flex; align-items: center; padding: 0 20px 0 22px; }
.info { width: 28px; height: 28px; }
.url { margin-left: 18px; margin-right: auto; font-size: 27px; color: #5f6368; letter-spacing: .33px; padding-top: 2px; }
.url em { color: #202124; }
.o-i { width: 32px; height: 32px; margin-left: 32px; }
.exts { display: flex; align-items: center; margin-left: auto; gap: 32px; }
.exts svg { width: 32px; height: 32px; }
.exts .avatar { width: 44px; height: 44px; margin: 0 -6px; }
.exts .kebab { width: 8px; height: 28px; margin: 0 0 0 12px; }

.page { flex: 1; display: flex; flex-direction: column; }
.nav-tabs { margin: 0 30px; height: 122px; flex: none; display: flex; gap: 65px; padding-left: 32px; border-bottom: 2px solid #f0f0f0; }
.nav-tabs a { height: 122px; line-height: 153px; font-size: 27px; letter-spacing: .1px; white-space: nowrap; flex: none; margin-right: -.8px; }
.nav-tabs .on { color: #1677ff; border-bottom: 4px solid #1677ff; }

.query { height: 64px; flex: none; margin: 48px 78px 0; display: flex; align-items: center; }
.field { width: 813px; height: 64px; display: flex; align-items: center; }
.label { width: 160px; padding: 1px 16px 0 0; text-align: right; font-size: 27px; }
.colon { margin-left: 4px; }
.input { width: 605px; height: 64px; border: 2px solid #d9d9d9; border-radius: 12px; padding-left: 22px; line-height: 60px; color: #bfbfbf; }
.buttons { margin-left: auto; display: flex; align-items: center; gap: 16px; white-space: nowrap; }
.btn { width: 127px; height: 64px; border: 2px solid #d9d9d9; border-radius: 12px; text-align: center; line-height: 60px; box-shadow: 0 4px 0 rgba(0, 0, 0, .02); }
.primary { background: #1677ff; border-color: #1677ff; color: #fff; box-shadow: 0 4px 0 rgba(5, 145, 255, .1); width: 128px; }
.expand { color: #1677ff; display: flex; align-items: center; gap: 16px; margin: 0 1px 0 16px; }
.expand svg { width: 25px; height: 25px; }

.tools { margin: 128px 86px 0 auto; flex: none; height: 32px; display: flex; gap: 32px; }
.tools svg { width: 32px; height: 32px; fill: #1f1f1f; }
.alert { margin: 48px 78px 0; height: 92px; flex: none; border-radius: 16px; background: #fafafa; color: #8b8b8b; display: flex; align-items: center; justify-content: space-between; padding: 2px 48px 0; }
.picked { display: flex; gap: 17px; }

.table { margin: 32px 78px 0; height: 1004px; flex: none; border: 2px solid #f0f0f0; border-radius: 16px; overflow: hidden; display: flex; flex-direction: column; }
.row { display: flex; height: 108px; width: 3176px; flex: none; }
.row.first { height: 110px; }
.cell { width: 300px; flex: none; overflow: hidden; border-right: 2px solid #f0f0f0; border-bottom: 2px solid #f0f0f0; padding: 33px 0 0 16px; }
.body .cell { font-size: 27px; }
.body .check { width: 120px; padding-top: 30px; }
.check { width: 120px; }
.stub { width: 106px; padding: 14px 0 0; }
.narrow { width: 174px; }
.ops { width: 374px; display: flex; gap: 16px; color: #1677ff; }
.body .ops { font-size: 28px; }
.editing { gap: 24px; }
.head { height: 94px; width: 100%; background: #fafafa; font-weight: 600; }
.head .cell { font-size: 26px; padding-top: 34px; }
.head .check { padding-top: 30px; }
.head .ops { width: 400px; color: #222; border-radius: 0 14px 0 0; padding: 32px 0 0 17px; font-weight: 700; font-size: 28px; }
.box { display: block; width: 32px; height: 32px; border: 2px solid #d9d9d9; border-radius: 8px; background: #fff; }
.ticked { background: #1677ff; border-color: #1677ff; }
.ticked::after { content: ''; display: block; width: 11px; height: 18px; margin: 2px 0 0 9px; border: solid #fff; border-width: 0 4px 4px 0; transform: rotate(45deg) scale(.92); }
.edit { display: flex; align-items: center; width: 266px; height: 64px; margin-top: -19px; border: 2px solid #d9d9d9; border-radius: 12px; padding: 1px 22px 0; }
.clear { width: 24px; height: 24px; margin: -3px 0 0 auto; }
.edit.tail { margin-top: 0; margin-left: -178px; }
.sliver { width: 2px; flex: none; border-bottom: 2px solid #f0f0f0; padding-top: 14px; }
.sliver i { display: block; height: 64px; background: linear-gradient(#d9d9d9 0 2px, transparent 2px 20px, #bfbfbf 20px 28px, transparent 28px 36px, #bfbfbf 36px 44px, transparent 44px 62px, #d9d9d9 62px); }
.body { height: 882px; flex: none; overflow: hidden; position: relative; }
.partial .cell { border-bottom: 0; }
.vthumb { position: absolute; right: 4px; top: 4px; width: 16px; height: 24px; border-radius: 8px; background: #c9c9c9; }
.hscroll { height: 24px; padding: 4px 0 0 555px; }
.hscroll i { display: block; width: 1248px; height: 16px; border-radius: 8px; background: #c9c9c9; }

.add { margin: 20px 78px 0; height: 64px; flex: none; border: 2px dashed #d9d9d9; border-radius: 12px; box-shadow: 0 4px 0 rgba(0, 0, 0, .02); display: flex; align-items: center; justify-content: center; gap: 18px; padding-left: 2px; }
.add svg { width: 24px; height: 24px; }

.dock {
  margin: 6px 90px 0; height: 130px; flex: none; display: flex; position: relative;
  padding: 18px 22px 0 4.500px; border: 2px solid rgba(255, 255, 255, .25); border-radius: 40px;
  background: linear-gradient(90deg, #595e6b 0, #5e606c 450px, #87566a 620px, #93567a 850px, #a3586b 1080px, #b05a5e 1270px, #9c556f 1520px, #8c546a 1720px, #96567a 1950px, #a2557f 2240px, #a7586c 2520px, #bd5c56 2800px, #cb5c50 3180px) padding-box;
  box-shadow: 0 0 90px 4px rgba(0, 0, 0, .22), 0 0 20px rgba(0, 0, 0, .12);
}
.app { width: 107.56px; flex: none; display: flex; flex-direction: column; align-items: center; }
.app > svg { width: 80px; height: 80px; }
.dot { width: 8px; height: 8px; margin-top: 18px; border-radius: 50%; background: #120409; }
.dock-sep { width: 2px; height: 94px; margin-left: 25px; background: #9c2215; flex: none; margin-top: -2px; }
.trash { width: 72px; height: 94px; margin-left: 40px; margin-top: -8px; }
</style>
